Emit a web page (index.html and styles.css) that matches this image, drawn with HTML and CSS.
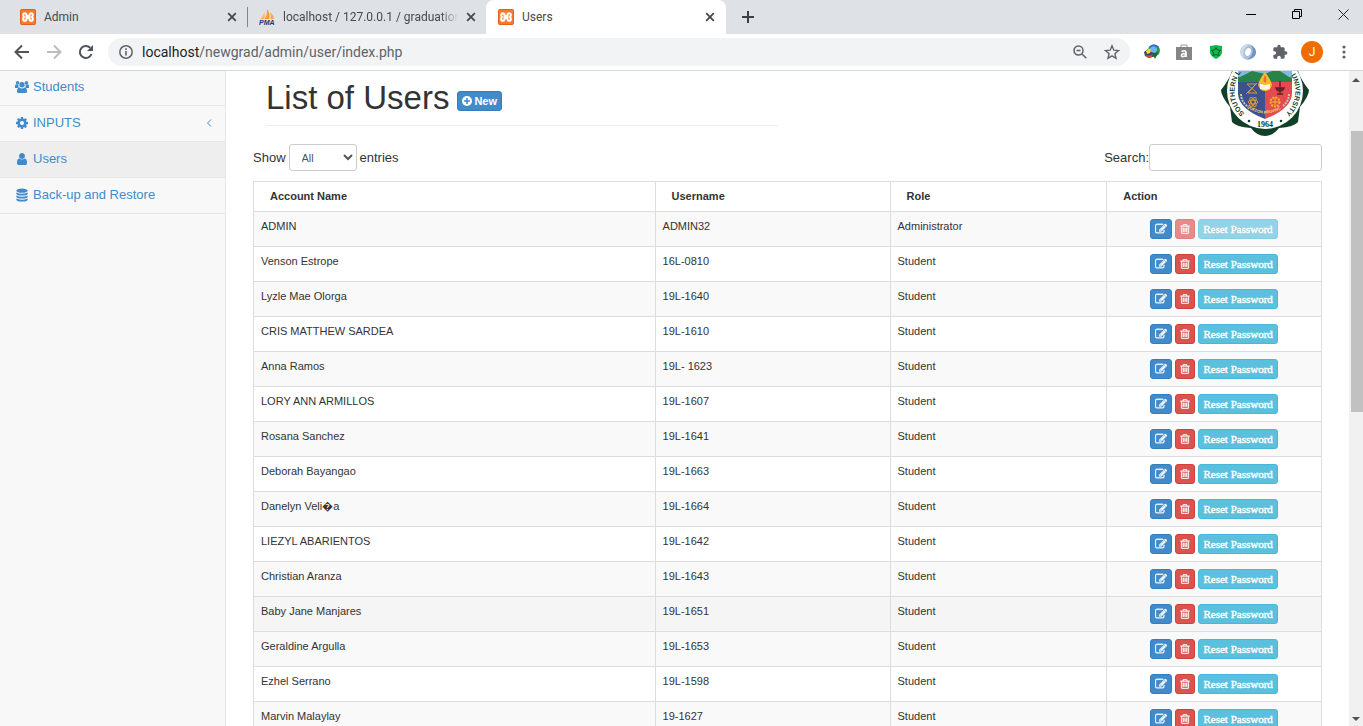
FILE: index.html
```html
<!DOCTYPE html>
<html lang="en">
<head>
<meta charset="utf-8">
<title>Users</title>
<link rel="stylesheet" href="styles.css">
</head>
<body>
<svg class="sprite" aria-hidden="true">
  <symbol id="xampp" viewBox="0 0 16 16"><rect width="16" height="16" rx="2" fill="#e3601a"/><rect x="1" y="1" width="14" height="14" rx="1" fill="#f47c30"/><path d="M5 4.200c-2.400 0-2.400 3.300-.4 3.800-2 .5-2 3.800.4 3.800 1.700 0 1.500-2 1.500-2.800h3c0 .8-.2 2.800 1.500 2.800 2.400 0 2.400-3.300.4-3.800 2-.5 2-3.800-.4-3.800-1.700 0-1.500 2-1.500 2.800h-3c0-.8.2-2.800-1.500-2.800z" fill="none" stroke="#fff" stroke-width="2"/></symbol>
  <symbol id="close" viewBox="0 0 10 10"><path d="M1.200 1.200l7.600 7.600M8.800 1.200L1.200 8.800" stroke="#45494d" stroke-width="1.800"/></symbol>
  <symbol id="edit" viewBox="0 0 1792 1792"><path fill="currentColor" stroke="currentColor" stroke-width="50" d="M888 1184l116-116-152-152-116 116v56h96v96h56zm440-720q-16-16-33 1l-350 350q-17 17-1 33t33-1l350-350q17-17 1-33zm80 594v190q0 119-84.500 203.500t-203.500 84.500h-832q-119 0-203.500-84.500t-84.500-203.500v-832q0-119 84.500-203.500t203.500-84.500h832q63 0 117 25 15 7 18 23 3 17-9 29l-49 49q-14 14-32 8-23-6-45-6h-832q-66 0-113 47t-47 113v832q0 66 47 113t113 47h832q66 0 113-47t47-113v-126q0-13 9-22l64-64q15-15 35-7t20 29zm-96-738l288 288-672 672h-288v-288zm444 132l-92 92-288-288 92-92q28-28 68-28t68 28l152 152q28 28 28 68t-28 68z"/></symbol>
  <symbol id="trash" viewBox="128 128 1536 1536"><path fill="currentColor" stroke="currentColor" stroke-width="50" d="M704 736v576q0 14-9 23t-23 9h-64q-14 0-23-9t-9-23v-576q0-14 9-23t23-9h64q14 0 23 9t9 23zm256 0v576q0 14-9 23t-23 9h-64q-14 0-23-9t-9-23v-576q0-14 9-23t23-9h64q14 0 23 9t9 23zm256 0v576q0 14-9 23t-23 9h-64q-14 0-23-9t-9-23v-576q0-14 9-23t23-9h64q14 0 23 9t9 23zm128 724v-948h-896v948q0 22 7 40.500t14.500 27 10.500 8.500h832q3 0 10.500-8.500t14.500-27 7-40.500zm-672-1076h448l-48-117q-7-9-17-11h-317q-10 2-17 11zm928 32v64q0 14-9 23t-23 9h-96v948q0 83-47 143.500t-113 60.500h-832q-66 0-113-58.500t-47-141.500v-952h-96q-14 0-23-9t-9-23v-64q0-14 9-23t23-9h309l70-167q15-37 54-63t79-26h320q40 0 79 26t54 63l70 167h309q14 0 23 9t9 23z"/></symbol>
</svg>

<header class="browser">
  <div class="tabs">
    <div class="tab"><svg class="fav"><use href="#xampp"/></svg><span class="tab-name">Admin</span><button class="tab-close" aria-label="Close tab"><svg class="x"><use href="#close"/></svg></button></div>
    <div class="tab tab-divided"><svg class="fav" viewBox="0 0 16 16"><path d="M1 10C3 9 5 6 5 3c1 3 1 5 0 7z" fill="#f9b25a"/><path d="M5.500 10C8 7 8 4 8 0c3 4 3 7 2 10z" fill="#f89c2e"/><path d="M11 10c1-2 1-4 0-7 2 2 4 4 4 7z" fill="#f7a94a"/><text x="0" y="15.500" class="pma">PMA</text></svg><span class="tab-name tab-fade">localhost / 127.0.0.1 / graduation</span><button class="tab-close" aria-label="Close tab"><svg class="x"><use href="#close"/></svg></button></div>
    <div class="tab tab-active"><svg class="fav"><use href="#xampp"/></svg><span class="tab-name">Users</span><button class="tab-close" aria-label="Close tab"><svg class="x"><use href="#close"/></svg></button></div>
    <button class="tab-new" aria-label="New tab"><svg width="12" height="12" viewBox="0 0 12 12"><path d="M6 0v12M0 6h12" stroke="#3c4043" stroke-width="2"/></svg></button>
    <div class="window-buttons">
      <button aria-label="Minimize"><svg width="10" height="10"><path d="M0 5.500h10" stroke="#000"/></svg></button>
      <button aria-label="Restore"><svg width="10" height="10" fill="none" stroke="#000"><path d="M.5 2.500h7v7h-7zM2.500 2.500v-2h7v7h-2"/></svg></button>
      <button aria-label="Close"><svg width="11" height="11"><path d="M.5.5l10 10M10.500.5l-10 10" stroke="#222"/></svg></button>
    </div>
  </div>
  <div class="toolbar">
    <button class="tool" aria-label="Back"><svg width="16" height="16" viewBox="0 0 16 16" fill="none" stroke="#505357" stroke-width="2"><path d="M15 8H2M8 1.500L1.500 8 8 14.500"/></svg></button>
    <button class="tool" aria-label="Forward"><svg width="16" height="16" viewBox="0 0 16 16" fill="none" stroke="#bbbdbf" stroke-width="2"><path d="M1 8h13M8 1.500L14.500 8 8 14.500"/></svg></button>
    <button class="tool" aria-label="Reload"><svg width="16" height="16" viewBox="0 0 16 16"><path d="M13.500 10A6 6 0 1 1 12.200 3.800" fill="none" stroke="#505357" stroke-width="2"/><path d="M15 1v6H9z" fill="#505357"/></svg></button>
    <div class="address">
      <svg width="14" height="14" viewBox="0 0 14 14"><circle cx="7" cy="7" r="6.200" fill="none" stroke="#5f6368" stroke-width="1.500"/><path d="M7 6v4.500M7 3.300v1.600" stroke="#5f6368" stroke-width="1.600"/></svg>
      <span class="url"><span class="host">localhost</span>/newgrad/admin/user/index.php</span>
      <button class="tool" aria-label="Zoom"><svg width="14" height="14" viewBox="0 0 14 14" fill="none" stroke="#5f6368" stroke-width="1.500"><circle cx="5.500" cy="5.500" r="4.500"/><path d="M9 9l4.300 4.300M3.500 5.500h4"/></svg></button>
      <button class="tool" aria-label="Bookmark"><svg width="16" height="16" viewBox="0 0 16 16" fill="none" stroke="#5f6368" stroke-width="1.400"><path d="M8 1.800l1.800 4.400 4.700.4-3.600 3.100 1.100 4.600L8 11.800l-4 2.500 1.100-4.600L1.500 6.600l4.700-.4z"/></svg></button>
    </div>
    <button class="tool" aria-label="Download manager"><svg width="16" height="16" viewBox="0 0 16 16"><circle cx="10" cy="6.500" r="6" fill="#2a9f3c"/><path d="M4.500 4q2-4 6-3.500 4 .5 4.500 4-5-2-10.500-.5z" fill="#3572cf"/><circle cx="9.500" cy="6" r="3.500" fill="#6db4f2"/><path d="M0 8l4-3 3 3 4 1 3-2-2 5-7 2-4-2z" fill="#31456e"/><path d="M2 7q3-3 5-2l-1 4-3 1z" fill="#f5dc3a"/><path d="M1 10q4 3 8 0l-1 3-4 1z" fill="#e3452c"/><path d="M8 9h6l-3 6z" fill="#176d2b"/></svg></button>
    <button class="tool" aria-label="Shopping"><svg width="16" height="16" viewBox="0 0 16 16"><path d="M5 4V1h6v3" fill="none" stroke="#999"/><path d="M0 3h16v13H0z" fill="#858585"/><path d="M5.500 7.500q4-2 4.500 1V13M10 10q-4-1-4.500 1t2 1.500 2.500-2" fill="none" stroke="#fff" stroke-width="1.600"/></svg></button>
    <button class="tool" aria-label="Protection"><svg width="14" height="14" viewBox="0 0 14 14"><path d="M1 1l6-1 6 1v7q-1 3.500-6 6-5-2.500-6-6z" fill="#10b950"/><path d="M7 2.500L8.500 5l3 .5-2 2 .5 3-3-1-3 1 .5-3-2-2 3-.5z" fill="none" stroke="#07582f"/></svg></button>
    <button class="tool" aria-label="Capture"><svg width="16" height="16" viewBox="0 0 16 16"><circle cx="8" cy="8" r="7.800" fill="#a9c0dc"/><path d="M9 .3A7.800 7.800 0 0 0 5 15Q0 7 9 .3z" fill="#d0dcec"/><path d="M11 1q5 9-4 14.500 12-2 8-11z" fill="#6f95c2"/><ellipse cx="8" cy="8" rx="2.800" ry="4" fill="#fff" transform="rotate(20 8 8)"/></svg></button>
    <button class="tool" aria-label="Extensions"><svg width="16" height="16" viewBox="0 0 24 24"><path fill="#5f6368" d="M20.500 11H19V7c0-1.100-.9-2-2-2h-4V3.500a2.500 2.500 0 0 0-5 0V5H4a2 2 0 0 0-2 2v3.800h1.500a2.700 2.700 0 0 1 0 5.400H2V20a2 2 0 0 0 2 2h3.800v-1.500a2.700 2.700 0 0 1 5.400 0V22H17a2 2 0 0 0 2-2v-4h1.500a2.500 2.500 0 0 0 0-5z"/></svg></button>
    <button class="tool" aria-label="Profile"><span class="avatar">J</span></button>
    <button class="tool" aria-label="Menu"><svg width="4" height="14" viewBox="0 0 4 14" fill="#5f6368"><circle cx="2" cy="2" r="1.600"/><circle cx="2" cy="7" r="1.600"/><circle cx="2" cy="12" r="1.600"/></svg></button>
  </div>
</header>

<div class="page">
  <nav class="sidebar">
    <a href="#"><svg width="14" height="14" viewBox="0 0 14 14" fill="currentColor"><circle cx="2.600" cy="2.700" r="1.800"/><circle cx="11.400" cy="2.700" r="1.800"/><path d="M0 8V6q0-1.700 1.200-1.700l2.200.3Q3 6.500 4 7.300L2.800 8zM14 8V6q0-1.700-1.200-1.700l-2.200.3q.4 1.900-.6 2.700l1.200.7z"/><circle cx="7" cy="4.700" r="2.700"/><path d="M2 11.500Q2 7.500 4.500 7.500q2.500 1.800 5 0 2.500 0 2.500 4 0 1.500-1.500 1.500h-7Q2 13 2 11.500z"/></svg><span>Students</span></a>
    <a href="#"><svg width="14" height="14" viewBox="0 0 1792 1792"><path fill="currentColor" d="M1152 896q0-106-75-181t-181-75-181 75-75 181 75 181 181 75 181-75 75-181zm512-109v222q0 12-8 23t-20 13l-185 28q-19 54-39 91 35 50 107 138 10 12 10 25t-9 23q-27 37-99 108t-94 71q-12 0-26-9l-138-108q-44 23-91 38-16 136-29 186-7 28-36 28h-222q-14 0-24.500-8.500t-11.500-21.500l-28-184q-49-16-90-37l-141 107q-10 9-25 9-14 0-25-11-126-114-165-168-7-10-7-23 0-12 8-23 15-21 51-66.500t54-70.500q-27-50-41-99l-183-27q-13-2-21-12.500t-8-23.500v-222q0-12 8-23t19-13l186-28q14-46 39-92-40-57-107-138-10-12-10-24 0-10 9-23 26-36 98.500-107.500t94.500-71.500q13 0 26 10l138 107q44-23 91-38 16-136 29-186 7-28 36-28h222q14 0 24.500 8.500t11.500 21.500l28 184q49 16 90 37l142-107q9-9 24-9 13 0 25 10 129 119 165 170 7 8 7 22 0 12-8 23-15 21-51 66.500t-54 70.500q26 50 41 98l183 28q13 2 21 12.500t8 23.500z"/></svg><span>INPUTS</span><svg class="arrow" width="6" height="8" viewBox="0 0 6 8" fill="none" stroke="currentColor"><path d="M5 .5L1.500 4 5 7.500"/></svg></a>
    <a href="#" class="current"><svg width="14" height="14" viewBox="0 0 1792 1792"><path fill="currentColor" d="M1536 1399q0 109-62.500 187t-150.500 78h-854q-88 0-150.500-78t-62.500-187q0-85 8.500-160.500t31.500-152 58.500-131 94-89 134.500-34.500q131 128 313 128t313-128q76 0 134.500 34.500t94 89 58.500 131 31.500 152 8.500 160.500zm-256-887q0 159-112.500 271.500t-271.500 112.500-271.500-112.500-112.500-271.500 112.500-271.500 271.500-112.500 271.500 112.500 112.500 271.500z"/></svg><span>Users</span></a>
    <a href="#"><svg width="14" height="14" viewBox="0 0 14 14" fill="currentColor"><ellipse cx="7" cy="2.700" rx="5.700" ry="2.100"/><path d="M1.300 4.500q5.700 2.700 11.400 0v1.200q-.5 1.800-5.700 1.900-5.200-.1-5.700-1.900zM1.300 7.500q5.700 2.700 11.400 0v1.200q-.5 1.800-5.700 1.900-5.200-.1-5.700-1.900zM1.300 10.500q5.700 2.700 11.400 0v1.200q-.5 1.800-5.700 1.900-5.200-.1-5.700-1.900z"/></svg><span>Back-up and Restore</span></a>
  </nav>

  <main class="content">
    <div class="heading">
      <div class="title"><h1>List of Users</h1><button class="btn primary new"><svg width="10" height="10" viewBox="0 0 10 10"><circle cx="5" cy="5" r="5" fill="#fff"/><path d="M5 2v6M2 5h6" stroke="#428bca" stroke-width="1.600"/></svg>New</button></div>
      <svg class="seal" width="90" height="90" viewBox="0 0 90 90" role="img" aria-label="Southern Luzon State University, 1964">
        <path d="M45 0Q36 0 33 5 22 5 14 13q-2 2-2 12Q9 34 1 44q0 6 9 17 1 7 2 15 4 5 19 6 6 8 14 8t14-8q15-1 19-6 1-8 2-15 9-11 9-17-8-10-11-19 0-10-2-12-8-8-19-8Q54 0 45 0z" fill="#123f27"/>
        <circle cx="45" cy="45" r="38" fill="#fff"/>
        <clipPath id="disc"><path d="M18 20h54v28q-1 15-27 25Q19 63 18 48z"/></clipPath>
        <g clip-path="url(#disc)"><path d="M18 20h27v60H18z" fill="#3d518f"/><path d="M45 20h27v60H45z" fill="#e44b50"/><path d="M18 20h54v11H18z" fill="#81b7e2"/><path d="M18 36V32l14-7 13 3 12-5 15 10v3z" fill="#278347"/></g>
        <g fill="none" stroke="#d89b30" stroke-width="1"><path d="M27 38h9l-8 9h9zM37 37L26 48"/><ellipse cx="33" cy="56" rx="5" ry="2"/><ellipse cx="33" cy="56" rx="5" ry="2" transform="rotate(60 33 56)"/><ellipse cx="33" cy="56" rx="5" ry="2" transform="rotate(120 33 56)"/></g>
        <path d="M56 42h8q-1 3-4 3t-4-3zM60 35v13M57 48h6" stroke="#622328" stroke-width="1.500" fill="#622328"/>
        <circle cx="55" cy="56" r="4.500" fill="none" stroke="#f5b52e" stroke-width="2" stroke-dasharray="2 1"/><path d="M55 52v8M51 56h8" stroke="#f5b52e"/>
        <path d="M45 26q-6 8-7 13 2 6 7 6t7-6q-1-5-7-13z" fill="#f6bd31"/><path d="M40 38l5 1 5-1v5l-5 1-5-1z" fill="#fff7d8"/><path d="M45 29q-3 5 0 8 3-3 0-8z" fill="#ef6b37"/>
        <g fill="none" stroke="#b9c6b2" stroke-width="2" stroke-dasharray="2 1"><path d="M21 48q0 7 6 12M69 48q0 7-6 12"/></g>
        <path id="motto" d="M28 62q17 11 34 0" fill="none"/><text class="seal-motto"><textPath href="#motto" startOffset="50%">QUEZON PROVINCE</textPath></text>
        <path id="ring-left" d="M24.500 67.500A30.400 30.400 0 0 1 45 14.600" fill="none"/><text class="seal-ring"><textPath href="#ring-left">SOUTHERN L</textPath></text>
        <path id="ring-right" d="M45 14.600A30.400 30.400 0 0 1 65.500 67.500" fill="none"/><text class="seal-ring seal-ring-end"><textPath href="#ring-right" startOffset="100%">UNIVERSITY</textPath></text>
        <circle cx="29" cy="75" r="1.300" fill="#123f27"/><circle cx="61" cy="75" r="1.300" fill="#123f27"/>
        <text x="45" y="81" class="seal-year">1964</text>
      </svg>
    </div>
    <div class="filters">
      <label>Show <select><option>All</option></select> entries</label>
      <label class="search">Search:<input type="search"></label>
    </div>
    <table class="users">
      <colgroup><col class="c-name"><col class="c-user"><col class="c-role"><col class="c-action"></colgroup>
      <thead><tr><th>Account Name</th><th>Username</th><th>Role</th><th>Action</th></tr></thead>
      <tbody>
        <tr><td>ADMIN</td><td>ADMIN32</td><td>Administrator</td><td><div class="actions"><button class="btn primary" aria-label="Edit"><svg><use href="#edit"/></svg></button><button class="btn danger" aria-label="Delete" disabled><svg><use href="#trash"/></svg></button><button class="btn info" disabled>Reset Password</button></div></td></tr>
        <tr><td>Venson Estrope</td><td>16L-0810</td><td>Student</td><td><div class="actions"><button class="btn primary" aria-label="Edit"><svg><use href="#edit"/></svg></button><button class="btn danger" aria-label="Delete"><svg><use href="#trash"/></svg></button><button class="btn info">Reset Password</button></div></td></tr>
        <tr><td>Lyzle Mae Olorga</td><td>19L-1640</td><td>Student</td><td><div class="actions"><button class="btn primary" aria-label="Edit"><svg><use href="#edit"/></svg></button><button class="btn danger" aria-label="Delete"><svg><use href="#trash"/></svg></button><button class="btn info">Reset Password</button></div></td></tr>
        <tr><td>CRIS MATTHEW SARDEA</td><td>19L-1610</td><td>Student</td><td><div class="actions"><button class="btn primary" aria-label="Edit"><svg><use href="#edit"/></svg></button><button class="btn danger" aria-label="Delete"><svg><use href="#trash"/></svg></button><button class="btn info">Reset Password</button></div></td></tr>
        <tr><td>Anna Ramos</td><td>19L- 1623</td><td>Student</td><td><div class="actions"><button class="btn primary" aria-label="Edit"><svg><use href="#edit"/></svg></button><button class="btn danger" aria-label="Delete"><svg><use href="#trash"/></svg></button><button class="btn info">Reset Password</button></div></td></tr>
        <tr><td>LORY ANN ARMILLOS</td><td>19L-1607</td><td>Student</td><td><div class="actions"><button class="btn primary" aria-label="Edit"><svg><use href="#edit"/></svg></button><button class="btn danger" aria-label="Delete"><svg><use href="#trash"/></svg></button><button class="btn info">Reset Password</button></div></td></tr>
        <tr><td>Rosana Sanchez</td><td>19L-1641</td><td>Student</td><td><div class="actions"><button class="btn primary" aria-label="Edit"><svg><use href="#edit"/></svg></button><button class="btn danger" aria-label="Delete"><svg><use href="#trash"/></svg></button><button class="btn info">Reset Password</button></div></td></tr>
        <tr><td>Deborah Bayangao</td><td>19L-1663</td><td>Student</td><td><div class="actions"><button class="btn primary" aria-label="Edit"><svg><use href="#edit"/></svg></button><button class="btn danger" aria-label="Delete"><svg><use href="#trash"/></svg></button><button class="btn info">Reset Password</button></div></td></tr>
        <tr><td>Danelyn Veli&#xFFFD;a</td><td>19L-1664</td><td>Student</td><td><div class="actions"><button class="btn primary" aria-label="Edit"><svg><use href="#edit"/></svg></button><button class="btn danger" aria-label="Delete"><svg><use href="#trash"/></svg></button><button class="btn info">Reset Password</button></div></td></tr>
        <tr><td>LIEZYL ABARIENTOS</td><td>19L-1642</td><td>Student</td><td><div class="actions"><button class="btn primary" aria-label="Edit"><svg><use href="#edit"/></svg></button><button class="btn danger" aria-label="Delete"><svg><use href="#trash"/></svg></button><button class="btn info">Reset Password</button></div></td></tr>
        <tr><td>Christian Aranza</td><td>19L-1643</td><td>Student</td><td><div class="actions"><button class="btn primary" aria-label="Edit"><svg><use href="#edit"/></svg></button><button class="btn danger" aria-label="Delete"><svg><use href="#trash"/></svg></button><button class="btn info">Reset Password</button></div></td></tr>
        <tr class="hovered"><td>Baby Jane Manjares</td><td>19L-1651</td><td>Student</td><td><div class="actions"><button class="btn primary" aria-label="Edit"><svg><use href="#edit"/></svg></button><button class="btn danger" aria-label="Delete"><svg><use href="#trash"/></svg></button><button class="btn info">Reset Password</button></div></td></tr>
        <tr><td>Geraldine Argulla</td><td>19L-1653</td><td>Student</td><td><div class="actions"><button class="btn primary" aria-label="Edit"><svg><use href="#edit"/></svg></button><button class="btn danger" aria-label="Delete"><svg><use href="#trash"/></svg></button><button class="btn info">Reset Password</button></div></td></tr>
        <tr><td>Ezhel Serrano</td><td>19L-1598</td><td>Student</td><td><div class="actions"><button class="btn primary" aria-label="Edit"><svg><use href="#edit"/></svg></button><button class="btn danger" aria-label="Delete"><svg><use href="#trash"/></svg></button><button class="btn info">Reset Password</button></div></td></tr>
        <tr><td>Marvin Malaylay</td><td>19-1627</td><td>Student</td><td><div class="actions"><button class="btn primary" aria-label="Edit"><svg><use href="#edit"/></svg></button><button class="btn danger" aria-label="Delete"><svg><use href="#trash"/></svg></button><button class="btn info">Reset Password</button></div></td></tr>
      </tbody>
    </table>
  </main>
  <div class="scrollbar" aria-hidden="true"><svg width="8" height="4"><path d="M0 4l4-4 4 4z" fill="#505050"/></svg><div class="track"><div class="thumb"></div></div><svg width="8" height="4"><path d="M0 0l4 4 4-4z" fill="#505050"/></svg></div>
</div>
</body>
</html>
```
FILE: styles.css
```css
* { box-sizing: border-box; }
body {
  margin: 0;
  height: 100vh;
  overflow: hidden;
  display: flex;
  flex-direction: column;
  background: #fff;
  color: #333;
  font: 13px/18px "Liberation Sans", Arial, sans-serif;
}
button { border: 0; padding: 0; background: none; font: inherit; color: inherit; }
svg { display: block; flex: none; }
.sprite { position: absolute; width: 0; height: 0; }

/* Browser frame */
.browser { flex: none; border-bottom: 1px solid #d5d7da; font-family: Roboto, "Noto Sans", sans-serif; }
.tabs { display: flex; height: 34px; padding-left: 8px; background: #dee1e6; overflow: hidden; }
.tab { display: flex; align-items: center; width: 239px; padding: 0 10px 0 12px; font-size: 12px; color: #45494d; }
.tab-divided { background: linear-gradient(#80868b, #80868b) 0 7px / 1px 20px no-repeat; }
.tab-active { background: #fff; width: 240px; padding-right: 11px; border-radius: 8px 8px 0 0; }
.fav { width: 16px; height: 16px; margin-right: 8px; }
.tab-name { flex: 1; min-width: 0; overflow: hidden; white-space: nowrap; }
.tab-fade { mask-image: linear-gradient(90deg, #000 90%, transparent); }
.tab-close { margin-left: 8px; }
.x { width: 10px; height: 10px; }
.pma { font: italic bold 7px "Liberation Sans", sans-serif; fill: #2c2f6b; }
.tab-new { width: 44px; display: grid; place-items: center; }
.window-buttons { display: flex; margin-left: auto; margin-right: -3px; }
.window-buttons button { width: 46px; height: 28px; display: grid; place-items: center; }
.toolbar { display: flex; align-items: center; height: 36px; padding: 0 3px 0 6px; }
.tool { width: 32px; height: 28px; display: grid; place-items: center; flex: none; }
.address { flex: 1; display: flex; align-items: center; height: 28px; margin: 0 6px; padding: 0 2px 0 11px; border-radius: 14px; background: #f1f3f4; }
.url { flex: 1; margin-left: 9px; font-size: 14px; color: #5f6368; }
.host { color: #202124; }
.avatar { display: grid; place-items: center; width: 22px; height: 22px; border-radius: 50%; background: #ef6c00; color: #fff; font: 12px Roboto, sans-serif; }

/* Page */
.page { flex: 1; min-height: 0; display: flex; overflow: hidden; }
.sidebar { flex: none; width: 226px; background: #f8f8f8; border-right: 1px solid #e7e7e7; }
.sidebar a { display: flex; align-items: center; gap: 4px; padding: 8px 13px 9px 15px; border-bottom: 1px solid #e7e7e7; color: #428bca; text-decoration: none; }
.sidebar a:first-child { padding-top: 7px; }
.sidebar .current { background: #eee; }
.sidebar span { flex: 1; }
.content { flex: 1; min-width: 0; padding: 0 27px; }
.heading { display: flex; align-items: flex-start; justify-content: space-between; height: 65px; padding: 0 12px 0 13px; overflow: hidden; }
.title { display: flex; align-items: center; gap: 8px; width: 49%; height: 55px; border-bottom: 1px solid #eee; }
h1 { margin: 0; font-size: 33px; line-height: 36px; font-weight: 400; }
.seal { align-self: flex-end; }
.seal-ring { font: bold 7px "Liberation Sans", sans-serif; fill: #123f27; }
.seal-ring-end { text-anchor: end; }
.seal-year { font: bold 8px "Liberation Serif", serif; text-anchor: middle; fill: #123f27; }
.seal-motto { font: bold 4px "Liberation Sans", sans-serif; text-anchor: middle; fill: #f5d676; }
.filters { display: flex; justify-content: space-between; margin: 8px 0 10px; height: 27px; }
.filters label { display: flex; align-items: center; gap: 3px; }
.filters .search { gap: 0; }
select, input { height: 27px; border: 1px solid #ccc; border-radius: 3px; background: #fff; color: #555; font: 11px "Liberation Sans", Arial, sans-serif; }
select { width: 68px; padding: 0 0 0 8px; }
input { width: 173px; padding: 4px 8px; }
.users { width: 100%; table-layout: fixed; border-collapse: collapse; font-size: 11px; line-height: 15px; }
.c-name { width: 37.6%; }
.c-user { width: 22%; }
.c-role { width: 20.3%; }
.users th, .users td { border: 1px solid #ddd; padding: 7px; text-align: left; vertical-align: top; }
.users th { padding: 7px 16px; }
.users tbody tr:nth-child(odd) { background: #f9f9f9; }
.users tbody .hovered { background: #f5f5f5; }
.actions { display: flex; justify-content: center; gap: 3px; }
.btn { display: flex; align-items: center; justify-content: center; height: 20px; border: 1px solid; border-radius: 3px; padding: 0 4px; color: #fff; font: 11px/15px "Liberation Serif", serif; white-space: nowrap; }
.btn:disabled { opacity: .65; }
.actions svg { width: 12px; height: 12px; }
.primary { background: #428bca; border-color: #357ebd; }
.danger { background: #d9534f; border-color: #d43f3a; padding: 0 4px; }
.actions .danger svg { width: 10px; height: 10px; }
.info { background: #5bc0de; border-color: #46b8da; -webkit-text-stroke: .4px #fff; }
.new { gap: 2px; margin-top: 6px; font: bold 11px/15px "Liberation Sans", Arial, sans-serif; }

.scrollbar { flex: none; width: 14px; display: flex; flex-direction: column; align-items: center; padding: 7px 0 5px; background: #f1f1f1; }
.track { flex: 1; width: 100%; padding: 49px 0 0 2px; }
.thumb { height: 48%; background: #c1c1c1; }
```
